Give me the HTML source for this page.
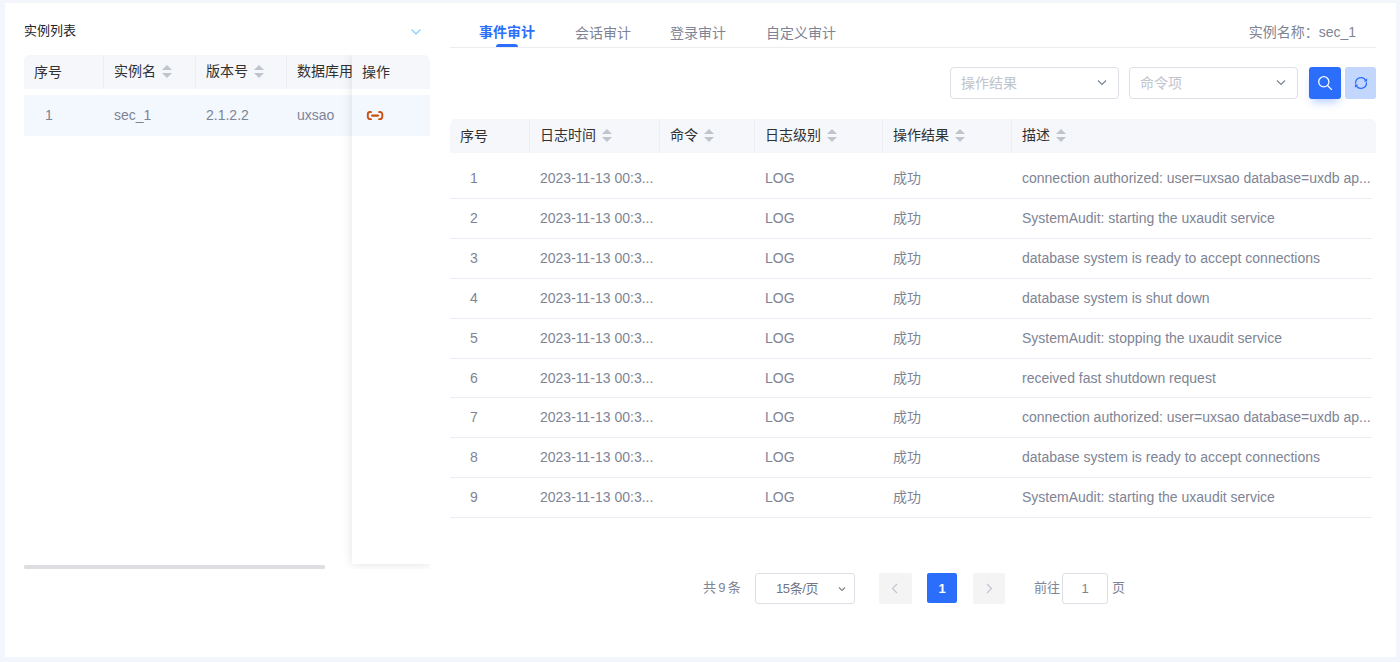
<!DOCTYPE html>
<html lang="zh-CN">
<head>
<meta charset="utf-8">
<title>审计</title>
<style>
*{box-sizing:border-box;margin:0;padding:0}
html,body{width:1400px;height:662px;overflow:hidden}
body{background:#f3f7fd;font-family:"Liberation Sans","Noto Sans CJK SC",sans-serif;font-size:14px;color:#606266;position:relative}
.card{position:absolute;left:5px;top:3px;width:1391px;height:654px;background:#fff;box-shadow:0 -1px 0 #f2f4f8}
.abs{position:absolute}
.ltitle{left:24px;top:22px;font-size:13px;color:#22252b;line-height:18px}
.th{background:#f5f7fa;color:#303133;font-size:14px;line-height:33px;height:34px;position:absolute;top:0;padding-left:10px;border-right:1px solid #ebeef5;white-space:nowrap;overflow:hidden}
.th:last-child{border-right:none}
.sort{display:inline-block;width:10px;height:34px;position:relative;vertical-align:top;margin-left:6px}
.sort:before,.sort:after{content:"";position:absolute;left:0;border:5px solid transparent}
.sort:before{top:5px;border-bottom-color:#c0c4cc}
.sort:after{top:18px;border-top-color:#c0c4cc}
.td{position:absolute;top:0;height:40px;line-height:39px;padding-left:10px;white-space:nowrap;overflow:hidden;font-size:14px;color:#7e8495}
.ell{text-overflow:ellipsis;padding-right:10px}
.lrow .td{height:41px;line-height:41px}
.row{position:absolute;left:0;height:40px;width:922px;border-bottom:1px solid #ebeef5}
</style>
</head>
<body>
<div class="card"></div>

<!-- left panel -->
<div class="abs ltitle">实例列表</div>
<svg class="abs" style="left:410px;top:27px" width="12" height="10" viewBox="0 0 12 10"><path d="M1.5 2.5 L6 7 L10.5 2.5" fill="none" stroke="#80ccff" stroke-width="1.15"/></svg>

<div class="abs" style="left:24px;top:55px;width:406px;height:34px;background:#f5f7fa;border-radius:6px 6px 0 0;overflow:hidden">
  <div class="th" style="left:0;width:80px;line-height:35px">序号</div>
  <div class="th" style="left:80px;width:92px">实例名<i class="sort"></i></div>
  <div class="th" style="left:172px;width:91px">版本号<i class="sort"></i></div>
  <div class="th" style="left:263px;width:143px;border-right:none">数据库用户</div>
</div>
<div class="abs lrow" style="left:24px;top:95px;width:406px;height:41px;background:#f3f8ff">
  <div class="td" style="left:0;width:80px;padding-left:21px">1</div>
  <div class="td" style="left:80px;width:92px">sec_1</div>
  <div class="td" style="left:172px;width:91px">2.1.2.2</div>
  <div class="td" style="left:263px;width:143px">uxsao</div>
</div>
<!-- fixed right column -->
<div class="abs" style="left:352px;top:55px;width:78px;height:509px;background:#fff;box-shadow:0 0 10px rgba(0,0,0,.12);clip-path:inset(0 0 -5px -12px)">
  <div class="abs" style="left:0;top:0;width:78px;height:34px;background:#f5f7fa;border-radius:0 6px 0 0;line-height:35px;padding-left:10px;color:#303133">操作</div>
  <div class="abs" style="left:0;top:40px;width:78px;height:41px;background:#f3f8ff">
    <svg class="abs" style="left:14px;top:15px" width="18" height="11" viewBox="0 0 18 11"><path d="M5 2H4.1A2.3 2.3 0 0 0 1.8 4.3V6.85A2.3 2.3 0 0 0 4.1 9.15H5M13.1 2H14A2.3 2.3 0 0 1 16.3 4.3V6.85A2.3 2.3 0 0 1 14 9.15H13.1" fill="none" stroke="#cb4f10" stroke-width="1.9" stroke-linecap="round"/><path d="M6.1 5.6H12" fill="none" stroke="#cb4f10" stroke-width="2.3" stroke-linecap="round"/></svg>
  </div>
</div>
<div class="abs" style="left:24px;top:565px;width:301px;height:4px;border-radius:1.5px;background:#dcdee1"></div>

<!-- right panel -->
<div class="abs" style="left:450px;top:47px;width:926px;height:1px;background:#ebedf0"></div>
<div class="abs" style="left:479px;top:22px;font-size:14px;font-weight:bold;color:#2a6efb;line-height:20px">事件审计</div>
<div class="abs" style="left:496px;top:44px;width:22px;height:3px;background:#2a6efb;border-radius:3px 3px 0 0"></div>
<div class="abs" style="left:575px;top:23px;font-size:14px;color:#7e8495;line-height:20px">会话审计</div>
<div class="abs" style="left:670px;top:23px;font-size:14px;color:#7e8495;line-height:20px">登录审计</div>
<div class="abs" style="left:766px;top:23px;font-size:14px;color:#7e8495;line-height:20px">自定义审计</div>
<div class="abs" style="left:1156px;width:200px;text-align:right;top:22px;font-size:14px;color:#7e8495;line-height:20px">实例名称：sec_1</div>

<!-- filter -->
<div class="abs sel" style="left:950px;top:67px;width:169px;height:32px;border:1px solid #dcdfe6;border-radius:4px;background:#fff;line-height:30px;padding-left:10px;color:#c0c4cc;font-size:14px">操作结果
  <svg class="abs" style="right:11px;top:11px" width="10" height="8" viewBox="0 0 10 8"><path d="M1 1.5 L5 5.5 L9 1.5" fill="none" stroke="#7a8396" stroke-width="1.2"/></svg>
</div>
<div class="abs sel" style="left:1129px;top:67px;width:169px;height:32px;border:1px solid #dcdfe6;border-radius:4px;background:#fff;line-height:30px;padding-left:10px;color:#c0c4cc;font-size:14px">命令项
  <svg class="abs" style="right:11px;top:11px" width="10" height="8" viewBox="0 0 10 8"><path d="M1 1.5 L5 5.5 L9 1.5" fill="none" stroke="#7a8396" stroke-width="1.2"/></svg>
</div>
<div class="abs" style="left:1309px;top:67px;width:32px;height:32px;border-radius:3px;background:#2a6efb;box-shadow:0 6px 8px -3px rgba(42,110,251,.35)">
  <svg class="abs" style="left:8px;top:8px" width="16" height="16" viewBox="0 0 16 16"><circle cx="6.8" cy="6.8" r="5.1" fill="none" stroke="#fff" stroke-width="1.25"/><path d="M10.5 10.5 L14.9 14.9" stroke="#fff" stroke-width="1.25" fill="none"/></svg>
</div>
<div class="abs" style="left:1345px;top:67px;width:31px;height:32px;border-radius:3px;background:#c2d6fe">
  <svg class="abs" style="left:7.7px;top:7.7px" width="16" height="16" viewBox="0 0 16 16"><path d="M2.65 8.75 A5.4 5.4 0 0 1 12.89 5.72 M13.35 7.25 A5.4 5.4 0 0 1 3.11 10.28" fill="none" stroke="#2a6efb" stroke-width="1.2"/><path d="M14.1 3.2 V6.6 H10.7 Z M1.9 12.8 V9.4 H5.3 Z" fill="#2a6efb"/></svg>
</div>

<!-- right table header -->
<div class="abs" style="left:450px;top:119px;width:926px;height:34px;background:#f5f7fa;border-radius:6px 6px 0 0;overflow:hidden">
  <div class="th" style="left:0;width:80px;line-height:35px">序号</div>
  <div class="th" style="left:80px;width:130px">日志时间<i class="sort"></i></div>
  <div class="th" style="left:210px;width:95px">命令<i class="sort"></i></div>
  <div class="th" style="left:305px;width:128px">日志级别<i class="sort"></i></div>
  <div class="th" style="left:433px;width:129px">操作结果<i class="sort"></i></div>
  <div class="th" style="left:562px;width:364px;border-right:none">描述<i class="sort"></i></div>
</div>
<div class="abs" id="rt" style="left:450px;top:159px;width:926px;height:360px">
  <div class="row" style="top:0px">
    <div class="td" style="left:0;width:80px;padding-left:20px">1</div>
    <div class="td" style="left:80px;width:130px">2023-11-13 00:3...</div>
    <div class="td" style="left:210px;width:95px"></div>
    <div class="td" style="left:305px;width:128px">LOG</div>
    <div class="td" style="left:433px;width:129px">成功</div>
    <div class="td" style="left:562px;width:364px">connection authorized: user=uxsao database=uxdb ap...</div>
  </div>
  <div class="row" style="top:40px">
    <div class="td" style="left:0;width:80px;padding-left:20px">2</div>
    <div class="td" style="left:80px;width:130px">2023-11-13 00:3...</div>
    <div class="td" style="left:210px;width:95px"></div>
    <div class="td" style="left:305px;width:128px">LOG</div>
    <div class="td" style="left:433px;width:129px">成功</div>
    <div class="td" style="left:562px;width:364px">SystemAudit: starting the uxaudit service</div>
  </div>
  <div class="row" style="top:80px">
    <div class="td" style="left:0;width:80px;padding-left:20px">3</div>
    <div class="td" style="left:80px;width:130px">2023-11-13 00:3...</div>
    <div class="td" style="left:210px;width:95px"></div>
    <div class="td" style="left:305px;width:128px">LOG</div>
    <div class="td" style="left:433px;width:129px">成功</div>
    <div class="td" style="left:562px;width:364px">database system is ready to accept connections</div>
  </div>
  <div class="row" style="top:120px">
    <div class="td" style="left:0;width:80px;padding-left:20px">4</div>
    <div class="td" style="left:80px;width:130px">2023-11-13 00:3...</div>
    <div class="td" style="left:210px;width:95px"></div>
    <div class="td" style="left:305px;width:128px">LOG</div>
    <div class="td" style="left:433px;width:129px">成功</div>
    <div class="td" style="left:562px;width:364px">database system is shut down</div>
  </div>
  <div class="row" style="top:160px">
    <div class="td" style="left:0;width:80px;padding-left:20px">5</div>
    <div class="td" style="left:80px;width:130px">2023-11-13 00:3...</div>
    <div class="td" style="left:210px;width:95px"></div>
    <div class="td" style="left:305px;width:128px">LOG</div>
    <div class="td" style="left:433px;width:129px">成功</div>
    <div class="td" style="left:562px;width:364px">SystemAudit: stopping the uxaudit service</div>
  </div>
  <div class="row" style="top:200px;height:39px">
    <div class="td" style="left:0;width:80px;padding-left:20px">6</div>
    <div class="td" style="left:80px;width:130px">2023-11-13 00:3...</div>
    <div class="td" style="left:210px;width:95px"></div>
    <div class="td" style="left:305px;width:128px">LOG</div>
    <div class="td" style="left:433px;width:129px">成功</div>
    <div class="td" style="left:562px;width:364px">received fast shutdown request</div>
  </div>
  <div class="row" style="top:239px">
    <div class="td" style="left:0;width:80px;padding-left:20px">7</div>
    <div class="td" style="left:80px;width:130px">2023-11-13 00:3...</div>
    <div class="td" style="left:210px;width:95px"></div>
    <div class="td" style="left:305px;width:128px">LOG</div>
    <div class="td" style="left:433px;width:129px">成功</div>
    <div class="td" style="left:562px;width:364px">connection authorized: user=uxsao database=uxdb ap...</div>
  </div>
  <div class="row" style="top:279px">
    <div class="td" style="left:0;width:80px;padding-left:20px">8</div>
    <div class="td" style="left:80px;width:130px">2023-11-13 00:3...</div>
    <div class="td" style="left:210px;width:95px"></div>
    <div class="td" style="left:305px;width:128px">LOG</div>
    <div class="td" style="left:433px;width:129px">成功</div>
    <div class="td" style="left:562px;width:364px">database system is ready to accept connections</div>
  </div>
  <div class="row" style="top:319px">
    <div class="td" style="left:0;width:80px;padding-left:20px">9</div>
    <div class="td" style="left:80px;width:130px">2023-11-13 00:3...</div>
    <div class="td" style="left:210px;width:95px"></div>
    <div class="td" style="left:305px;width:128px">LOG</div>
    <div class="td" style="left:433px;width:129px">成功</div>
    <div class="td" style="left:562px;width:364px">SystemAudit: starting the uxaudit service</div>
  </div>
</div>

<!-- pagination -->
<div class="abs" style="left:703px;top:579px;font-size:13px;color:#7e8495;line-height:18px;word-spacing:-1.3px">共 9 条</div>
<div class="abs" style="left:755px;top:573px;width:100px;height:31px;border:1px solid #dcdfe6;border-radius:3px;font-size:13px;color:#6f7689;line-height:29px;padding-left:20px;letter-spacing:-0.4px">15条/页
  <svg class="abs" style="right:8px;top:11.5px" width="8" height="7" viewBox="0 0 8 7"><path d="M1 1.5 L4 4.5 L7 1.5" fill="none" stroke="#80838a" stroke-width="1.2"/></svg>
</div>
<div class="abs" style="left:879px;top:573px;width:33px;height:31px;background:#f4f4f5;border-radius:2px">
  <svg class="abs" style="left:12px;top:9.5px" width="8" height="11" viewBox="0 0 8 11"><path d="M6 1 L1.5 5.5 L6 10" fill="none" stroke="#c0c4cc" stroke-width="1.1"/></svg>
</div>
<div class="abs" style="left:927px;top:573px;width:30px;height:30px;background:#2a6efb;border-radius:2px;color:#fff;font-weight:bold;font-size:13px;text-align:center;line-height:31px">1</div>
<div class="abs" style="left:973px;top:573px;width:32px;height:31px;background:#f4f4f5;border-radius:2px">
  <svg class="abs" style="left:12px;top:9.5px" width="8" height="11" viewBox="0 0 8 11"><path d="M2 1 L6.5 5.5 L2 10" fill="none" stroke="#c0c4cc" stroke-width="1.1"/></svg>
</div>
<div class="abs" style="left:1034px;top:579px;font-size:13px;color:#7e8495;line-height:18px">前往</div>
<div class="abs" style="left:1062px;top:573px;width:46px;height:31px;border:1px solid #dcdfe6;border-radius:3px;font-size:13px;color:#7e8495;line-height:29px;text-align:center">1</div>
<div class="abs" style="left:1112px;top:579px;font-size:13px;color:#7e8495;line-height:18px">页</div>
</body>
</html>
